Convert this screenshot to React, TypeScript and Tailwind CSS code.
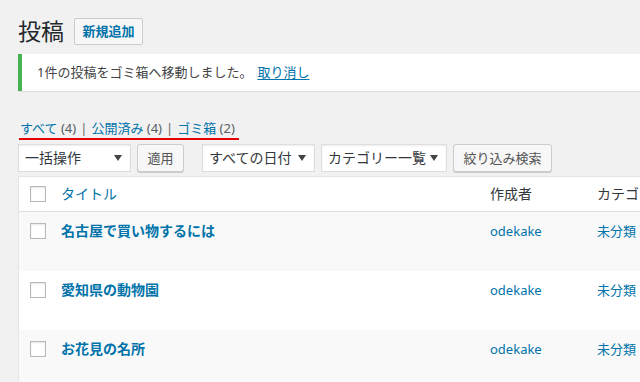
const font = "font-['Noto_Sans','Noto_Sans_CJK_JP',sans-serif]";

const Arrow = () => (
  <svg width="8" height="6" viewBox="0 0 8 6" className="shrink-0">
    <path d="M0 0 L8 0 L4 6 Z" fill="#444" />
  </svg>
);

const Select = ({ label, w }: { label: string; w: string }) => (
  <div
    className={`${w} h-[28px] flex items-center justify-between pl-[6px] pr-[8px] bg-white border border-[#ddd] shadow-[inset_0_1px_2px_rgba(0,0,0,0.07)] text-[14px] text-[#32373c] leading-none`}
  >
    <span>{label}</span>
    <Arrow />
  </div>
);

const Button = ({ label, w }: { label: string; w: string }) => (
  <div
    className={`${w} h-[28px] flex items-center justify-center bg-[#f7f7f7] border border-[#ccc] rounded-[3px] shadow-[0_1px_0_#ccc] text-[13px] text-[#555] leading-none`}
  >
    {label}
  </div>
);

const Checkbox = () => (
  <div className="w-[16px] h-[16px] bg-white border border-[#b4b9be] shadow-[inset_0_1px_2px_rgba(0,0,0,0.1)]" />
);

const rows = ["名古屋で買い物するには", "愛知県の動物園", "お花見の名所"];

export default function App() {
  return (
    <div className={`w-[640px] h-[382px] overflow-hidden bg-[#f1f1f1] ${font}`}>
      <div className="pl-[18px] pt-[18px] w-[700px]">
        <div className="flex items-center h-[27px] gap-[10px]">
          <h1 className="text-[23px] leading-none text-[#23282d] font-normal">投稿</h1>
          <div className="w-[69px] h-[27px] flex items-center justify-center bg-[#f7f7f7] border border-[#ccc] rounded-[2px] text-[13px] font-bold text-[#0073aa] leading-none">
            新規追加
          </div>
        </div>

        <div className="mt-[9px] h-[37px] flex items-center bg-white border-l-4 border-[#46b450] shadow-[0_1px_1px_rgba(0,0,0,0.08)] pl-[15px] text-[13px] text-[#444] leading-none">
          <span>1件の投稿をゴミ箱へ移動しました。</span>
          <span className="ml-[5px] text-[#0073aa] underline underline-offset-2">取り消し</span>
        </div>

        <div className="mt-[28px] pl-[2px] h-[19px] flex items-center text-[13px] leading-none text-[#0073aa] whitespace-nowrap">
          <span>すべて <span className="text-[#555d66]">(4)</span></span>
          <span className="text-[#666] mx-[4px]">|</span>
          <span>公開済み <span className="text-[#555d66]">(4)</span></span>
          <span className="text-[#666] mx-[4px]">|</span>
          <span>ゴミ箱 <span className="text-[#555d66]">(2)</span></span>
        </div>
        <div className="ml-[1px] w-[220px] h-[2px] bg-[#e60000]" />

        <div className="mt-[4px] flex items-center">
          <Select label="一括操作" w="w-[113px]" />
          <div className="ml-[6px]">
            <Button label="適用" w="w-[47px]" />
          </div>
          <div className="ml-[18px]">
            <Select label="すべての日付" w="w-[113px]" />
          </div>
          <div className="ml-[6px]">
            <Select label="カテゴリー一覧" w="w-[126px]" />
          </div>
          <div className="ml-[6px]">
            <Button label="絞り込み検索" w="w-[99px]" />
          </div>
        </div>

        <div className="mt-[4px] bg-white border border-[#e5e5e5] shadow-[0_1px_1px_rgba(0,0,0,0.04)]">
          <div className="flex h-[35px] items-center border-b border-[#e1e1e1] text-[14px] leading-none text-[#32373c]">
            <div className="w-[42px] pl-[11px]">
              <Checkbox />
            </div>
            <div className="w-[429px] text-[#0073aa]">タイトル</div>
            <div className="w-[107px]">作成者</div>
            <div>カテゴリー</div>
          </div>
          {rows.map((t, i) => (
            <div
              key={t}
              className={`flex h-[59px] pt-[11px] ${i % 2 === 0 ? "bg-[#f9f9f9]" : "bg-white"}`}
            >
              <div className="w-[42px] pl-[11px]">
                <Checkbox />
              </div>
              <div className="w-[429px] text-[14px] font-bold leading-[16px] text-[#0073aa]">{t}</div>
              <div className="w-[107px] text-[13px] leading-[16px] text-[#0073aa]">odekake</div>
              <div className="text-[13px] leading-[16px] text-[#0073aa]">未分類</div>
            </div>
          ))}
        </div>
      </div>
    </div>
  );
}
